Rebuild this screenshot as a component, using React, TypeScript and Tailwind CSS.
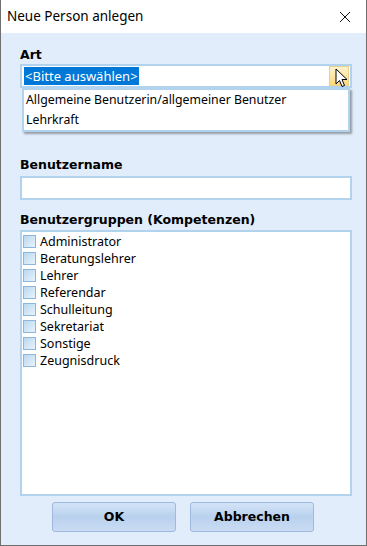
import React from "react";

const groups = [
  "Administrator",
  "Beratungslehrer",
  "Lehrer",
  "Referendar",
  "Schulleitung",
  "Sekretariat",
  "Sonstige",
  "Zeugnisdruck",
];

const labelFont = { fontFamily: '"DejaVu Sans", sans-serif' };
const uiFont = { fontFamily: '"Noto Sans", sans-serif' };

function Checkbox() {
  return (
    <span className="w-[13px] h-[13px] border border-[#8db6da] bg-gradient-to-br from-[#b9d8f0] to-[#e8f3fc] shrink-0" />
  );
}

export default function App() {
  return (
    <div className="w-[367px] h-[546px] flex flex-col border border-t-0 border-[#6f6f6f] bg-[#e1edfb] overflow-hidden">
      {/* title bar */}
      <div className="h-[33px] bg-white flex items-center justify-between pl-[6px] pr-[12px] shrink-0">
        <span className="text-[13.5px] text-black" style={uiFont}>
          Neue Person anlegen
        </span>
        <svg width="12" height="12" viewBox="0 0 12 12" className="mr-[3px]">
          <path d="M1 1 L11 11 M11 1 L1 11" stroke="#111" strokeWidth="1" />
        </svg>
      </div>

      <div className="flex flex-col flex-1 pl-[19px] pr-[14px] pt-[13px] pb-[13px]">
        {/* Art */}
        <div className="text-[12.5px] font-bold text-black leading-[17px]" style={labelFont}>
          Art
        </div>
        <div className="relative mt-[1px]">
          <div className="h-[24px] border-2 border-[#b1d3ee] bg-white flex items-center pl-[2px] pr-[1px]">
            <span className="bg-[#0078d7] text-white text-[13px] leading-[18px] px-[1px]" style={uiFont}>
              &lt;Bitte auswählen&gt;
            </span>
            <span className="flex-1" />
            <span className="w-[20px] h-[20px] border border-[#e8cf8a] bg-gradient-to-b from-[#fff4cf] to-[#fdd77a] relative">
              <svg width="16" height="22" viewBox="0 0 16 22" className="absolute left-[5px] top-[1px]">
                <path
                  d="M1 1 L1 16 L4.5 12.5 L7 18.5 L9.5 17.5 L7 11.5 L12 11.5 Z"
                  fill="white"
                  stroke="black"
                  strokeWidth="1"
                  strokeLinejoin="round"
                />
              </svg>
            </span>
          </div>
          {/* dropdown list */}
          <div className="ml-[2px] mr-[2px] h-[44px] border-2 border-[#b1d3ee] bg-white shadow-[2px_2px_2px_rgba(0,0,0,0.35)] flex flex-col pl-[2px]">
            <span className="text-[12.3px] leading-[20px] text-black" style={uiFont}>
              Allgemeine Benutzerin/allgemeiner Benutzer
            </span>
            <span className="text-[12.3px] leading-[20px] text-black" style={uiFont}>
              Lehrkraft
            </span>
          </div>
        </div>

        {/* Benutzername */}
        <div className="text-[12.5px] font-bold text-black leading-[17px] mt-[24px]" style={labelFont}>
          Benutzername
        </div>
        <div className="h-[24px] border-2 border-[#b1d3ee] bg-white mt-[3px]" />

        {/* Benutzergruppen */}
        <div className="text-[12.5px] font-bold text-black leading-[17px] mt-[11px]" style={labelFont}>
          Benutzergruppen (Kompetenzen)
        </div>
        <div className="flex-1 border-2 border-[#b1d3ee] bg-white mt-[2px] pl-[1px] pt-[1px] flex flex-col">
          {groups.map((g) => (
            <div key={g} className="flex items-center gap-[4px] h-[17px]">
              <Checkbox />
              <span className="text-[12.5px] text-black leading-[17px]" style={uiFont}>
                {g}
              </span>
            </div>
          ))}
        </div>

        {/* buttons */}
        <div className="flex gap-[14px] mt-[6px] pl-[32px]">
          {["OK", "Abbrechen"].map((b) => (
            <button
              key={b}
              className="w-[124px] h-[30px] rounded-[3px] border border-[#9fb9dc] bg-gradient-to-b from-[#d4e4f7] via-[#b9d1ee] to-[#cadcf3] text-[12.5px] font-bold text-black"
              style={labelFont}
            >
              {b}
            </button>
          ))}
        </div>
      </div>
    </div>
  );
}
